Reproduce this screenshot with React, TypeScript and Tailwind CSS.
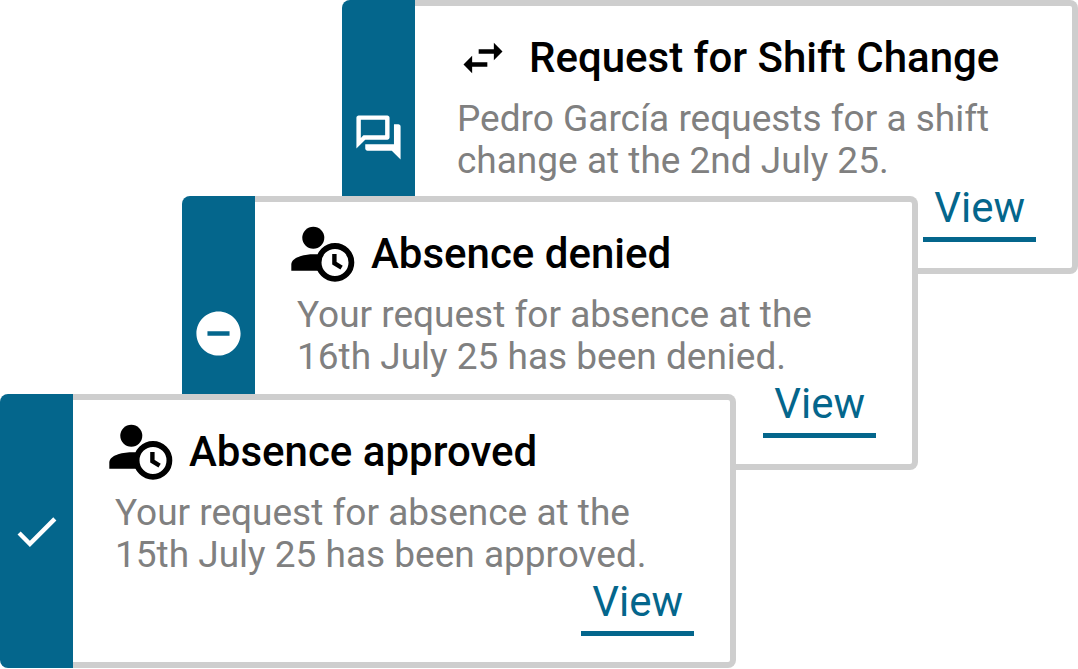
import type { ReactNode } from "react";
import { MdCheck, MdOutlineForum, MdRemoveCircle, MdSwapHoriz } from "react-icons/md";

type Notification = {
    id: string;
    title: string;
    lines: string[];
    status: ReactNode;
    icon: ReactNode;
    position: string;
};

function PersonClock() {
    return (
        <svg viewBox="0 0 64 56" className="-ml-1.5 h-14 w-16 shrink-0" fill="currentColor" aria-hidden="true">
            <circle cx="22.3" cy="11.8" r="11" />
            <path d="M0.3 44.8V38.5C0.3 32 12 28.3 22.5 28.3C25 28.3 27 28.4 29 28.7L30 44.8Z" />
            <circle cx="44" cy="36.4" r="16.4" fill="white" stroke="currentColor" strokeWidth="5.8" />
            <path d="M43.4 28V37.2L50.6 41.6" fill="none" stroke="currentColor" strokeWidth="4.4" />
        </svg>
    );
}

const notifications: Notification[] = [
    {
        id: "shift-change",
        title: "Request for Shift Change",
        lines: ["Pedro García requests for a shift", "change at the 2nd July 25."],
        status: <MdOutlineForum size={53} />,
        icon: <MdSwapHoriz size={52} className="mr-1 shrink-0" />,
        position: "self-end",
    },
    {
        id: "absence-denied",
        title: "Absence denied",
        lines: ["Your request for absence at the", "16th July 25 has been denied."],
        status: <MdRemoveCircle size={53} />,
        icon: <PersonClock />,
        position: "self-end mr-40 -mt-[78px]",
    },
    {
        id: "absence-approved",
        title: "Absence approved",
        lines: ["Your request for absence at the", "15th July 25 has been approved."],
        status: <MdCheck size={53} />,
        icon: <PersonClock />,
        position: "self-start -mt-[76px]",
    },
];

function NotificationCard({ item }: { item: Notification }) {
    return (
        <article className={`relative flex w-full max-w-[736px] ${item.position}`}>
            <div className="flex w-[73px] shrink-0 items-center justify-center rounded-l-lg bg-[#04668c] text-white">
                {item.status}
            </div>
            <div className="flex grow flex-col rounded-r-lg border-6 border-l-0 border-[#cecece] bg-white pt-6 pr-9 pb-[26px] pl-[42px]">
                <header className="flex h-14 items-center gap-4 text-black">
                    {item.icon}
                    <h2 className="text-[42px] leading-[56px] font-medium">{item.title}</h2>
                </header>
                <p className="mt-3 text-[37px] leading-[42px] text-[#808080]">
                    {item.lines.map((line) => (
                        <span key={line} className="block">{line}</span>
                    ))}
                </p>
                <a
                    href={`#${item.id}`}
                    className="self-end border-b-5 border-[#04668c] px-[11px] pb-[3px] text-[42px] leading-[52px] text-[#04668c]"
                >
                    View
                </a>
            </div>
        </article>
    );
}

export default function App() {
    return (
        <main className="flex flex-col overflow-hidden bg-white font-['Roboto',sans-serif]">
            {notifications.map((item) => (
                <NotificationCard key={item.id} item={item} />
            ))}
        </main>
    );
}
